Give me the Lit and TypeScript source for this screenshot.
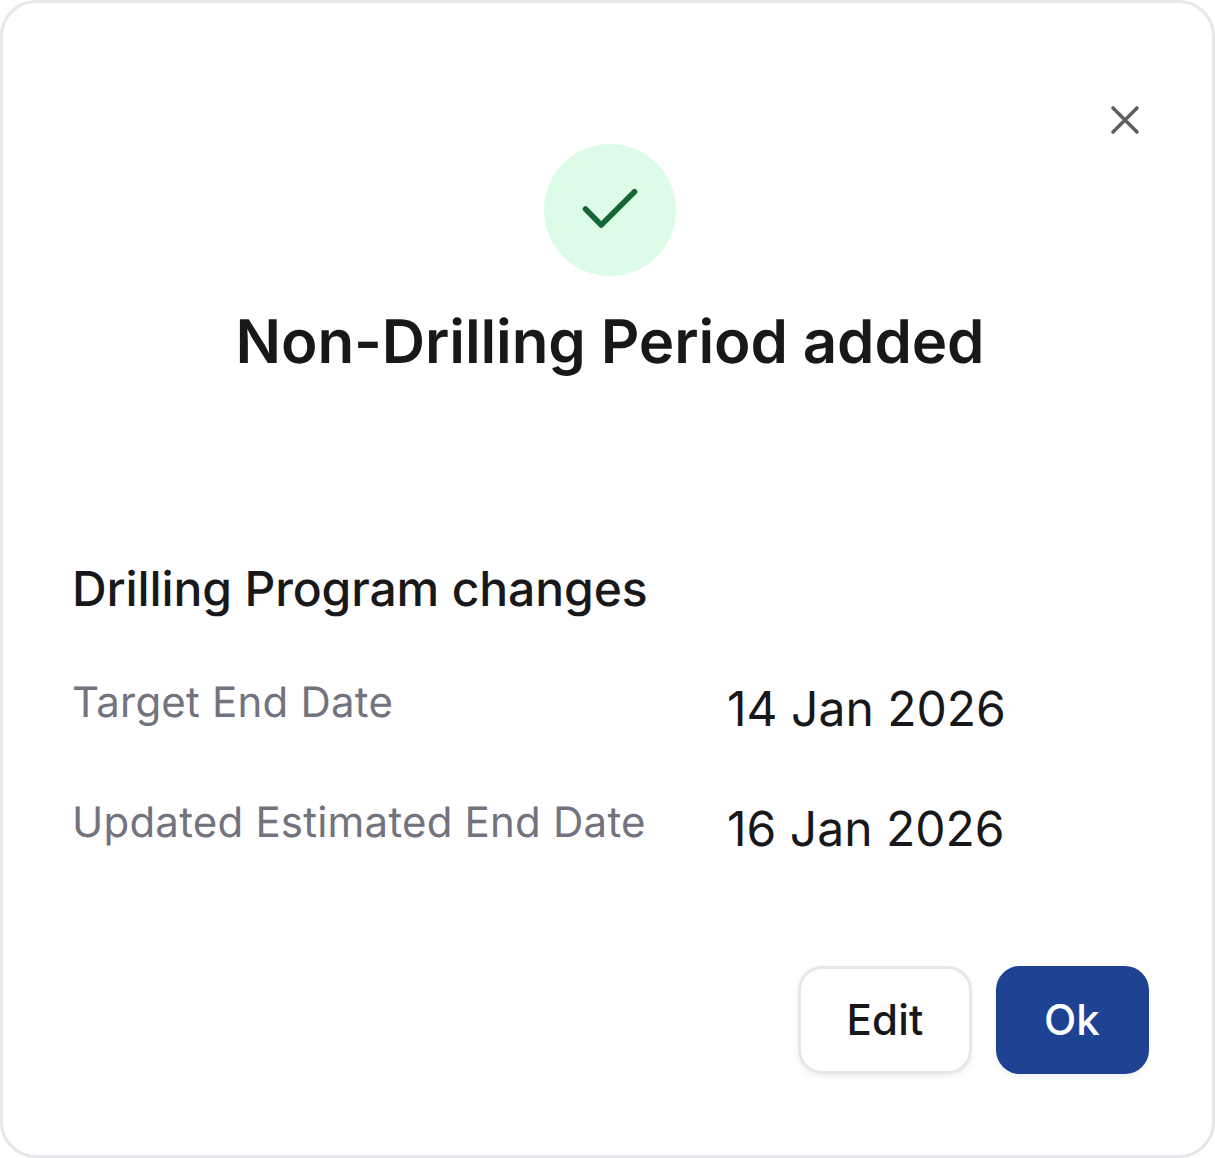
import { html, css, LitElement } from 'lit';
import { customElement } from 'lit/decorators.js';

@customElement('app-root')
export class AppRoot extends LitElement {
  static styles = css`
    :host {
      display: block;
      font-family: Inter, 'Noto Sans', sans-serif;
      text-rendering: geometricPrecision;
    }

    .card {
      box-sizing: border-box;
      position: relative;
      width: 1215px;
      height: 1158px;
      padding: 141px 64px 81px 69px;
      display: flex;
      flex-direction: column;
      background: #fff;
      border: 3px solid #e5e7eb;
      border-radius: 36px;
    }

    .close {
      position: absolute;
      top: 99px;
      right: 69px;
      width: 36px;
      height: 36px;
      display: block;
    }

    .header {
      display: flex;
      flex-direction: column;
      align-items: center;
    }

    .badge {
      width: 132px;
      height: 132px;
      border-radius: 50%;
      background: #dcfce7;
      display: flex;
      align-items: center;
      justify-content: center;
    }

    .title {
      margin: 30px 0 0;
      font-size: 60px;
      line-height: 72px;
      font-weight: 600;
      letter-spacing: -0.12px;
      font-variation-settings: 'opsz' 20;
      color: #18181b;
    }

    .section-title {
      margin: 175px 0 0;
      font-size: 48px;
      line-height: 72px;
      font-weight: 500;
      letter-spacing: -0.12px;
      font-variation-settings: 'opsz' 16;
      color: #18181b;
    }

    .rows {
      margin-top: 48px;
      display: grid;
      grid-template-columns: 655px 1fr;
      row-gap: 48px;
    }

    .label {
      font-size: 42px;
      line-height: 60px;
      letter-spacing: 0.22px;
      font-variation-settings: 'opsz' 14;
      color: #73737f;
    }

    .value {
      font-size: 48px;
      line-height: 72px;
      font-variation-settings: 'opsz' 16;
      color: #18181b;
    }

    .actions {
      margin-top: auto;
      margin-right: -1px;
      display: flex;
      justify-content: flex-end;
      gap: 24px;
    }

    button {
      box-sizing: border-box;
      height: 108px;
      border-radius: 24px;
      font: 500 42px/60px Inter, 'Noto Sans', sans-serif;
      letter-spacing: 0.22px;
      font-variation-settings: 'opsz' 14;
      box-shadow: 0 3px 6px rgba(0, 0, 0, 0.06);
    }

    .edit {
      width: 174px;
      background: #fff;
      border: 3px solid #e5e7eb;
      color: #18181b;
    }

    .ok {
      width: 153px;
      padding-right: 7px;
      background: #1f4393;
      border: none;
      color: #fff;
    }
  `;

  render() {
    return html`
      <div class="card">
        <svg class="close" viewBox="0 0 36 36" fill="none" stroke="#5f5f63" stroke-width="3.6" stroke-linecap="round">
          <path d="M6 6 L30 30 M30 6 L6 30" />
        </svg>
        <div class="header">
          <div class="badge">
            <svg width="72" height="72" viewBox="0 0 72 72" fill="none" stroke="#166534" stroke-width="5.5" stroke-linecap="round" stroke-linejoin="round">
              <path d="M11.5 35 L27.2 51 L60.5 17.7" />
            </svg>
          </div>
          <h1 class="title">Non-Drilling Period added</h1>
        </div>
        <h2 class="section-title">Drilling Program changes</h2>
        <div class="rows">
          <div class="label">Target End Date</div>
          <div class="value">14 Jan 2026</div>
          <div class="label">Updated Estimated End Date</div>
          <div class="value">16 Jan 2026</div>
        </div>
        <div class="actions">
          <button class="edit">Edit</button>
          <button class="ok">Ok</button>
        </div>
      </div>
    `;
  }
}
